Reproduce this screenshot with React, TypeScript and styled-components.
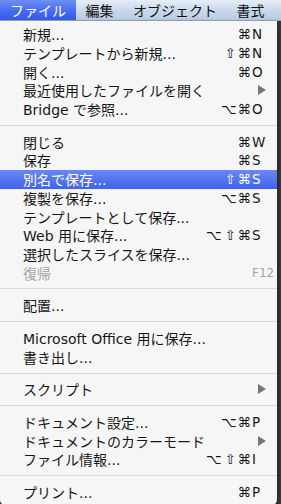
import React from 'react'
import styled, { createGlobalStyle } from 'styled-components';

type Item = {
  label: string
  mods?: string[]
  keyName?: string
  submenu?: boolean
  active?: boolean
  disabled?: boolean
}

const sections: Item[][] = [
  [
    { label: '新規...', mods: ['⌘'], keyName: 'N' },
    { label: 'テンプレートから新規...', mods: ['⇧', '⌘'], keyName: 'N' },
    { label: '開く...', mods: ['⌘'], keyName: 'O' },
    { label: '最近使用したファイルを開く', submenu: true },
    { label: 'Bridge で参照...', mods: ['⌥', '⌘'], keyName: 'O' },
  ],
  [
    { label: '閉じる', mods: ['⌘'], keyName: 'W' },
    { label: '保存', mods: ['⌘'], keyName: 'S' },
    { label: '別名で保存...', mods: ['⇧', '⌘'], keyName: 'S', active: true },
    { label: '複製を保存...', mods: ['⌥', '⌘'], keyName: 'S' },
    { label: 'テンプレートとして保存...' },
    { label: 'Web 用に保存...', mods: ['⌥', '⇧', '⌘'], keyName: 'S' },
    { label: '選択したスライスを保存...' },
    { label: '復帰', keyName: 'F12', disabled: true },
  ],
  [{ label: '配置...' }],
  [
    { label: 'Microsoft Office 用に保存...' },
    { label: '書き出し...' },
  ],
  [{ label: 'スクリプト', submenu: true }],
  [
    { label: 'ドキュメント設定...', mods: ['⌥', '⌘'], keyName: 'P' },
    { label: 'ドキュメントのカラーモード', submenu: true },
    { label: 'ファイル情報...', mods: ['⌥', '⇧', '⌘'], keyName: 'I' },
  ],
  [{ label: 'プリント...', mods: ['⌘'], keyName: 'P' }],
]

const barItems = ['ファイル', '編集', 'オブジェクト', '書式', '選択']

const App = () => {
  return (
    <Screen>
      <GlobalStyle />
      <MenuBar>
        {barItems.map((name, i) => (
          <BarItem key={name} $open={i === 0}>{name}</BarItem>
        ))}
      </MenuBar>
      <Dropdown>
        {sections.map((items, s) => (
          <React.Fragment key={s}>
            {s > 0 && <Separator />}
            {items.map((item) => (
              <Row key={item.label} $active={item.active} $disabled={item.disabled}>
                <Label>{item.label}</Label>
                {item.submenu ? (
                  <Arrow />
                ) : (
                  <Shortcut>
                    <Mods>
                      {(item.mods || []).map((m, i) => (
                        <Mod key={i}>{m}</Mod>
                      ))}
                    </Mods>
                    <Key $small={!item.mods}>{item.keyName}</Key>
                  </Shortcut>
                )}
              </Row>
            ))}
          </React.Fragment>
        ))}
      </Dropdown>
    </Screen>
  )
}

export default App

const GlobalStyle = createGlobalStyle`
  body {
    margin: 0;
    background: #3b3b3b;
  }
`;

const Screen = styled.div`
  width: 281px;
  height: 504px;
  overflow: hidden;
  background: #3b3b3b;
  font-family: "DejaVu Sans", "Noto Sans CJK JP", sans-serif;
`;

const MenuBar = styled.div`
  display: flex;
  height: 21px;
  background: linear-gradient(#e6edf7, #c9d7ea 55%, #b9cbe3);
  border-bottom: 1px solid #9aa8bc;
  box-sizing: border-box;
  white-space: nowrap;
`;

const BarItem = styled.div<{ $open?: boolean }>`
  display: flex;
  align-items: center;
  flex-shrink: 0;
  padding: 0 9.5px 0 10px;
  font-family: "Noto Sans CJK JP", sans-serif;
  font-size: 14px;
  color: ${(p) => (p.$open ? '#fff' : '#111')};
  background: ${(p) => (p.$open ? 'linear-gradient(#6f8ff4, #4a6ef0 50%, #3258ec)' : 'transparent')};
`;

const Dropdown = styled.div`
  width: 277px;
  padding: 4px 0 4px;
  background: #f6f6f6;
  border-radius: 0 0 5px 5px;
  box-shadow: 1px 2px 4px rgba(0, 0, 0, 0.5);
`;

const Row = styled.div<{ $active?: boolean; $disabled?: boolean }>`
  display: flex;
  align-items: center;
  height: 18.7px;
  padding: 0 11px 0 23px;
  font-size: 14px;
  white-space: nowrap;
  color: ${(p) => (p.$active ? '#fff' : p.$disabled ? '#a5a5a5' : '#161616')};
  background: ${(p) => (p.$active ? 'linear-gradient(#6a88f2, #4062ef)' : 'transparent')};
`;

const Label = styled.span`
  flex: 1;
`;

const Shortcut = styled.span`
  display: flex;
  align-items: center;
`;

const Mods = styled.span`
  display: flex;
`;

const Mod = styled.span`
  width: 15px;
  text-align: right;
  font-size: 13.5px;
`;

const Key = styled.span<{ $small?: boolean }>`
  width: 14px;
  margin-left: ${(p) => (p.$small ? '-2px' : '1px')};
  font-size: ${(p) => (p.$small ? '12px' : '13.5px')};
  overflow: visible;
`;

const Arrow = styled.span`
  width: 0;
  height: 0;
  border-top: 5px solid transparent;
  border-bottom: 5px solid transparent;
  border-left: 8px solid #767676;
`;

const Separator = styled.div`
  height: 1px;
  margin: 6.5px 0;
  background: #d9d9d9;
`;
